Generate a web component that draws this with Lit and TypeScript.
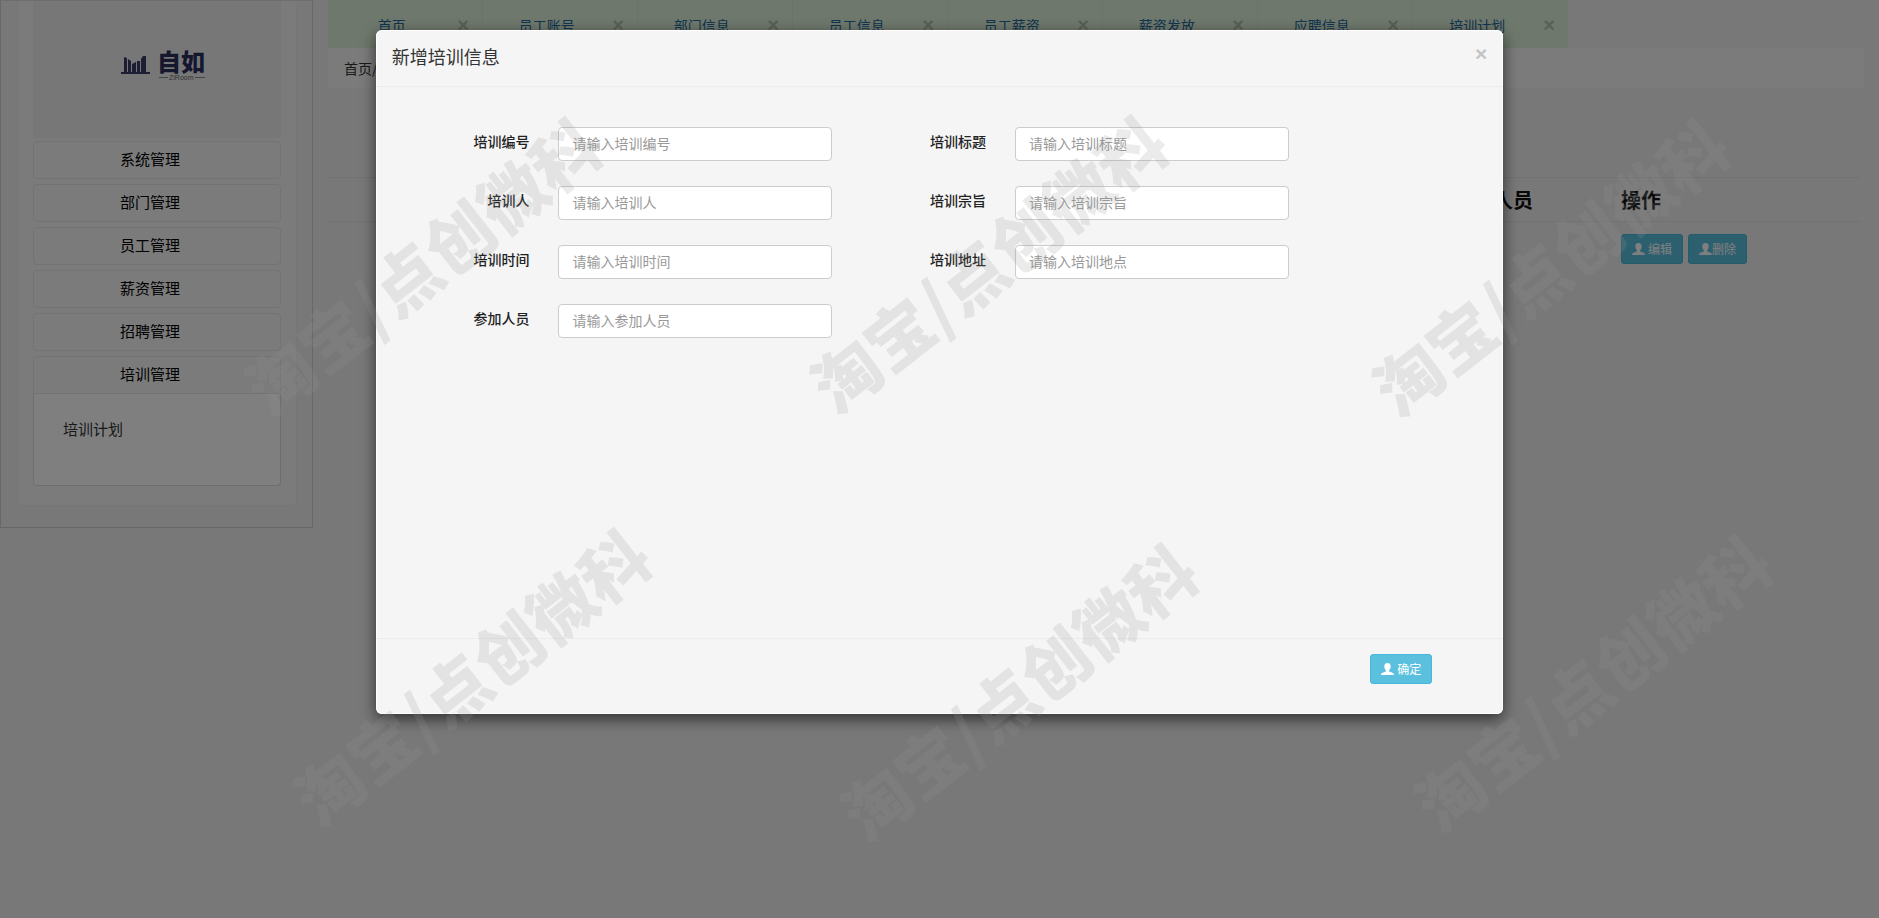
import { LitElement, html, css, svg } from "lit";
import { customElement, state } from "lit/decorators.js";

const userIcon = html`<svg class="icon" viewBox="0 0 13 12" aria-hidden="true">
  ${svg`<path fill="currentColor" d="M6.500 0C4.300 0 3.200 1.400 3.300 3.400C3.350 5 4 6.400 4.900 7.200C5.100 8 4.800 8.500 4.100 8.800L1.600 9.700C.6 10.100 .1 10.700 0 12H13C12.900 10.700 12.400 10.100 11.400 9.700L8.900 8.800C8.200 8.500 7.900 8 8.100 7.200C9 6.400 9.650 5 9.700 3.400C9.800 1.400 8.700 0 6.500 0Z"/>`}
</svg>`;

const menus = ["系统管理", "部门管理", "员工管理", "薪资管理", "招聘管理"];
const tabs = ["首页", "员工账号", "部门信息", "员工信息", "员工薪资", "薪资发放", "应聘信息", "培训计划"];
const fields = [
  ["code", "培训编号", "请输入培训编号"],
  ["title", "培训标题", "请输入培训标题"],
  ["trainer", "培训人", "请输入培训人"],
  ["purpose", "培训宗旨", "请输入培训宗旨"],
  ["time", "培训时间", "请输入培训时间"],
  ["place", "培训地址", "请输入培训地点"],
  ["members", "参加人员", "请输入参加人员"],
];
const marks = [
  [421, 264], [987, 262], [1549, 265],
  [470, 675], [1017, 690], [1591, 681],
];

@customElement("app-root")
export class AppRoot extends LitElement {
  @state() private open = true;

  static styles = css`
    :host {
      display: block;
      position: relative;
      min-height: 100vh;
      overflow: hidden;
      background: #f0f0f0;
      color: #333;
      font: 14px/20px "Noto Sans CJK SC", sans-serif;
    }
    * { box-sizing: border-box; }
    a { color: inherit; text-decoration: none; }
    button { font: inherit; cursor: pointer; }
    .page { display: flex; align-items: flex-start; gap: 15px; }
    .side { flex: 0 0 313px; padding: 0 15px 21px 16px; border: 1px solid #cfcfcf; border-top-color: #ddd; }
    .panel { padding: 0 15px 19px; background: #f6f6f6; border: 1px solid #ececec; border-top: 0; border-radius: 0 0 4px 4px; }
    .logo { display: flex; justify-content: center; height: 137px; padding: 48px 0 0 14px; background: #efefef; margin-bottom: 3px; }
    .logo svg { width: 90px; height: 34px; overflow: visible; }
    .menu { display: flex; flex-direction: column; gap: 5px; }
    .item { display: block; width: 100%; height: 38px; padding: 0 14px 2px 0; border: 1px solid #e6e6e6; border-radius: 4px; background: #f6f6f6; color: #000; font-size: 15px; text-align: center; }
    .last .item { border-radius: 4px 4px 0 0; }
    .sub { display: block; height: 92px; padding: 25px 29px; border: 1px solid #dcdcdc; border-top: 0; border-radius: 0 0 4px 4px; background: #fff; font-size: 15px; color: #333; }
    .main { flex: 1; min-width: 0; padding-right: 15px; }
    .tabs { display: flex; width: fit-content; height: 48px; background: #dff0d8; }
    .tab { display: flex; align-items: center; width: 155px; padding: 2px 13px 0 0; border-right: 1px solid #d8e8d2; }
    .tab:last-child { border-right: 0; }
    .tab a { flex: 1; padding-right: 2px; text-align: center; color: #23689f; }
    .tab button { padding: 0; border: 0; background: none; color: #b3c1ae; font: bold 20px/20px "Liberation Sans", sans-serif; }
    .crumbs { padding: 10px 16px; height: 40px; background: #f7f7f7; border-radius: 0 0 4px 4px; }
    .list { width: calc(100% - 3px); margin-top: 89px; border-collapse: collapse; table-layout: fixed; }
    .list th { height: 44px; padding: 0; border: solid #e4e4e4; border-width: 1px 0; color: #111; font-size: 20px; line-height: 28px; text-align: left; }
    .list td { padding: 12px 0; }
    .list .ops { width: 240px; }
    .list .who { width: 168px; }
    .acts { display: flex; gap: 5px; }
    .btn { display: inline-flex; align-items: center; gap: 3px; height: 30px; padding: 0 10px; border: 1px solid #46b8da; border-radius: 3px; background: #5bc0de; color: #fff; font-size: 12px; line-height: 18px; }
    .btn.tight { gap: 0; }
    .icon { width: 13px; height: 12px; }
    .backdrop { position: absolute; inset: 0; background: rgba(0, 0, 0, 0.5); }
    .modal { position: absolute; top: 30px; left: 20%; width: 60%; background: #f5f5f5; border-radius: 6px; box-shadow: inset 0 0 0 1px #fff, 0 5px 15px rgba(0, 0, 0, 0.6); }
    .head { display: flex; justify-content: space-between; align-items: flex-start; height: 57px; padding: 14px 16px; border-bottom: 1px solid #ececec; }
    .head h4 { margin: 0; font-size: 18px; font-weight: 400; line-height: 24px; }
    .close { padding: 0; border: 0; background: none; color: #c4c4c4; font: bold 21px/20px "Liberation Sans", sans-serif; }
    .form { display: grid; grid-template-columns: 1fr 1fr; grid-auto-rows: 34px; row-gap: 25px; min-height: 551px; padding: 40px 19% 0 0; }
    .field { display: grid; grid-template-columns: 40% 60%; }
    .field label { padding: 4px 29px 0 0; color: #222; font-weight: 500; text-align: right; }
    .field input { width: 100%; height: 34px; padding: 5px 13px 7px; border: 1px solid #ccc; border-radius: 4px; background: #fff; color: #555; font: inherit; }
    .field input::placeholder { color: #999; opacity: 1; }
    .foot { display: flex; justify-content: flex-end; height: 76px; padding: 15px 71px 15px 15px; border-top: 1px solid #ececec; }
    .marks { position: absolute; inset: 0; pointer-events: none; overflow: hidden; }
    .mark { position: absolute; translate: -50% -50%; rotate: -38deg; white-space: nowrap; color: rgba(151, 151, 151, 0.19); font-size: 67px; line-height: 68px; font-weight: 900; }
  `;

  private close() {
    this.open = false;
  }

  render() {
    return html`
      <div class="page">
        <aside class="side">
          <div class="panel">
            <div class="logo">
              <svg viewBox="0 0 90 34" role="img" aria-label="自如">
                <path fill="#3a3d66" d="M5 23V8l3 1v14h1V10l3 2v11h1V15l4-2v10h1V12h3v11h1V10l2-3h3v16h4v2H2v-2z" />
                <g fill="#2b2f5e" font-family="Noto Sans CJK SC, sans-serif">
                  <text x="38" y="22" font-size="24" font-weight="900">自如</text>
                  <text x="50" y="31" font-size="7" font-family="Liberation Sans, sans-serif" fill="#666">ZiRoom</text>
                </g>
                <path stroke="#888" d="M40 28.500h9M76 28.500h10" />
              </svg>
            </div>
            <nav class="menu">
              ${menus.map((m) => html`<button class="item">${m}</button>`)}
              <div class="last">
                <button class="item" aria-expanded="true">培训管理</button>
                <a class="sub" href="#plan">培训计划</a>
              </div>
            </nav>
          </div>
        </aside>
        <main class="main">
          <div class="tabs">
            ${tabs.map((t) => html`<div class="tab"><a href="#tab">${t}</a><button aria-label="关闭">×</button></div>`)}
          </div>
          <div class="crumbs">首页/</div>
          <table class="list">
            <thead><tr><th></th><th class="who">参加人员</th><th class="ops">操作</th></tr></thead>
            <tbody><tr><td></td><td></td><td><div class="acts">
              <button class="btn">${userIcon}编辑</button>
              <button class="btn tight">${userIcon}删除</button>
            </div></td></tr></tbody>
          </table>
        </main>
      </div>
      ${this.open
        ? html`<div class="backdrop"></div>
            <section class="modal" role="dialog" aria-labelledby="dlg">
              <header class="head">
                <h4 id="dlg">新增培训信息</h4>
                <button class="close" aria-label="关闭" @click=${this.close}>×</button>
              </header>
              <form class="form">
                ${fields.map(([id, label, hint]) => html`<div class="field">
                  <label for=${id}>${label}</label>
                  <input id=${id} type="text" placeholder=${hint} />
                </div>`)}
              </form>
              <footer class="foot"><button class="btn" @click=${this.close}>${userIcon}确定</button></footer>
            </section>`
        : ""}
      <div class="marks" aria-hidden="true">
        ${marks.map(([x, y]) => html`<span class="mark" style="left:${x}px;top:${y}px">淘宝/点创微科</span>`)}
      </div>
    `;
  }
}
